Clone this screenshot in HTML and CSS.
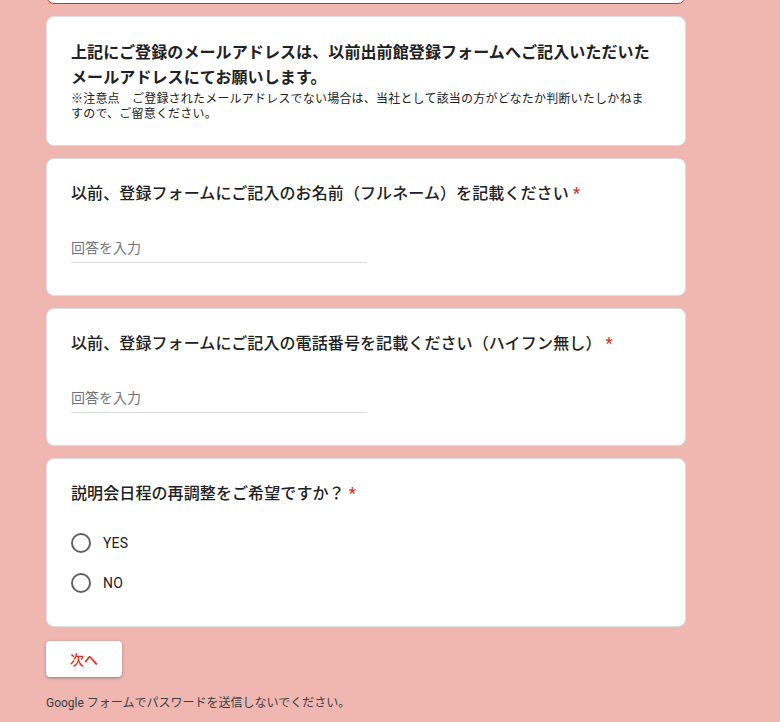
FILE: index.html
```html
<!DOCTYPE html>
<html lang="ja">
<head>
    <meta charset="UTF-8">
    <meta name="viewport" content="width=device-width, initial-scale=1.0">
    <title>出前館 登録確認フォーム</title>
    <link rel="stylesheet" href="styles.css">
</head>
<body>
    <main class="form">
        <div class="card card-error"></div>

        <div class="card">
            <h2 class="info-title">上記にご登録のメールアドレスは、以前出前館登録フォームへご記入いただいたメールアドレスにてお願いします。</h2>
            <p class="info-note">※注意点　ご登録されたメールアドレスでない場合は、当社として該当の方がどなたか判断いたしかねますので、ご留意ください。</p>
        </div>

        <div class="card">
            <label class="question" for="full-name">以前、登録フォームにご記入のお名前（フルネーム）を記載ください <span class="required">*</span></label>
            <input class="answer" id="full-name" type="text" placeholder="回答を入力">
        </div>

        <div class="card">
            <label class="question" for="phone">以前、登録フォームにご記入の電話番号を記載ください（ハイフン無し） <span class="required">*</span></label>
            <input class="answer" id="phone" type="text" placeholder="回答を入力">
        </div>

        <div class="card">
            <div class="question">説明会日程の再調整をご希望ですか？ <span class="required">*</span></div>
            <div class="options" role="radiogroup">
                <label class="option"><input type="radio" name="reschedule" value="yes"><span class="radio"></span>YES</label>
                <label class="option"><input type="radio" name="reschedule" value="no"><span class="radio"></span>NO</label>
            </div>
        </div>

        <button class="next" type="button">次へ</button>

        <p class="footer-note">Google フォームでパスワードを送信しないでください。</p>
    </main>
</body>
</html>
```

FILE: styles.css
```css
body {
    margin: 0;
    background-color: #f0b7b1;
    font-family: Roboto, "Noto Sans CJK JP", sans-serif;
    color: #202124;
}

.form {
    width: 640px;
    margin-left: 46px;
    display: flex;
    flex-direction: column;
    align-items: flex-start;
    gap: 12px;
}

.card {
    box-sizing: border-box;
    width: 100%;
    background: #fff;
    border: 1px solid #dadce0;
    border-radius: 8px;
    padding: 23px 24px 32px;
}

.card-error {
    height: 60px;
    margin-top: -56px;
    border-color: #d93025;
}

.info-title {
    margin: 0;
    font-size: 16px;
    font-weight: 700;
    line-height: 25px;
    letter-spacing: 0.1px;
}

.info-note {
    max-width: 580px;
    margin: 2px 0 -9px;
    font-size: 12px;
    line-height: 15px;
    letter-spacing: 0.2px;
}

.question {
    display: block;
    font-size: 16px;
    font-weight: 500;
    line-height: 24px;
    letter-spacing: 0.1px;
}

.required {
    color: #d93025;
}

.answer {
    display: block;
    box-sizing: content-box;
    width: 296px;
    margin-top: 24px;
    padding: 8px 0 4px;
    border: none;
    border-bottom: 1px solid #dadce0;
    font-family: inherit;
    font-size: 14px;
    line-height: 20px;
    height: 20px;
    color: #202124;
    outline: none;
}

.answer::placeholder {
    color: #70757a;
}

.options {
    margin-top: 17px;
    margin-bottom: -9px;
}

.option {
    display: flex;
    align-items: center;
    height: 40px;
    font-size: 14px;
    letter-spacing: 0.2px;
    cursor: pointer;
}

.option input {
    display: none;
}

.radio {
    box-sizing: border-box;
    width: 20px;
    height: 20px;
    border: 2px solid #5f6368;
    border-radius: 50%;
    margin-right: 12px;
}

.next {
    margin-top: 2px;
    height: 36px;
    padding: 0 24px;
    background: #fff;
    border: none;
    border-radius: 4px;
    box-shadow: 0 1px 2px rgba(60, 64, 67, 0.3), 0 1px 3px 1px rgba(60, 64, 67, 0.15);
    font-family: inherit;
    font-size: 14px;
    font-weight: 500;
    color: #d93025;
    cursor: pointer;
}

.footer-note {
    margin: 6px 0 0;
    font-size: 12px;
    line-height: 16px;
    color: #3c4043;
}
```
